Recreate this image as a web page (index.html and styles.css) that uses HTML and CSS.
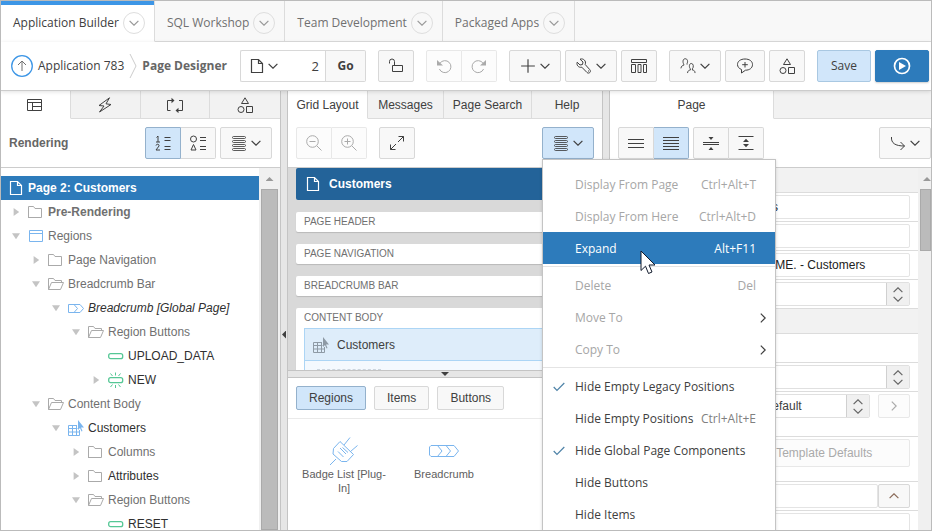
FILE: index.html
```html
<!DOCTYPE html>
<html lang="en">
<head>
<meta charset="utf-8">
<title>Page Designer</title>
<link rel="stylesheet" href="styles.css">
</head>
<body>
<svg class="sprite" aria-hidden="true">
  <symbol id="down" viewBox="0 0 10 6"><path d="M.6.8 5 5.2 9.4.8"/></symbol>
  <symbol id="page" viewBox="0 0 14 16"><path d="M1.5 1.5h7l4 4v9h-11zM8.500 1.500v4h4"/></symbol>
  <symbol id="lock" viewBox="0 0 16 16"><path d="M4.500 7.500h10v6h-10zM6.500 7.500V3.500a2.500 2.500 0 0 0-5 0V5.500"/></symbol>
  <symbol id="undo" viewBox="0 0 16 16"><path d="M4 5.200A6 6 0 1 1 3.400 11"/><path class="solid" d="M1 2v5.500h6z"/></symbol>
  <symbol id="plus" viewBox="0 0 14 14"><path d="M7 1v12M1 7h12"/></symbol>
  <symbol id="wrench" viewBox="0 0 16 16"><path d="M4 1.200 7 4 6.500 6.500 4 7 1.200 4.200C.2 7 2.500 10 5.800 9.200L11 14.500c2 1.800 4.600-.8 2.800-2.800L9.200 6.500C10.500 3 7.500 0 4 1.200zM12.500 12.500v1"/></symbol>
  <symbol id="layout" viewBox="0 0 16 16"><path d="M.5 1.500h15v3H.500zM.5 6.500h4v8h-4zM7 6.500h3v8H7zM12.500 6.500h3v8h-3z"/></symbol>
  <symbol id="people" viewBox="0 0 17 17"><path d="M1 11c.3-2.500 1.500-3 3-3.300V6.500C2.800 5 2.700.8 5.500.8S8.500 4 7.500 6v1M8 16c.2-2.500 1.500-3 3-3.200v-1.300c-1.500-1.500-1.500-5.700 1-5.700s2.700 4 1.200 5.700v1.300c1.500.2 2.700.7 2.800 3.200"/></symbol>
  <symbol id="comment" viewBox="0 0 16 16"><path d="M4.500 11.500v3.500l4-2.800c4 0 7-2.200 7-5.600S12.500 1 8 1 .5 3.300.5 6.500c0 2.300 1.500 4 4 5zM8 4v5.500M5.200 6.700h5.600"/></symbol>
  <symbol id="shapes" viewBox="0 0 16 16"><path d="M8 .8 11.500 6.500h-7zM9.500 9.500h6v6h-6z"/><circle cx="4" cy="12.500" r="3"/></symbol>
  <symbol id="play" viewBox="0 0 18 18"><circle cx="9" cy="9" r="7.500" stroke-width="1.700"/><path class="solid" d="M6 5l7 4-7 4z"/></symbol>
  <symbol id="tree" viewBox="0 0 16 14"><path d="M.5 1.500h14v11H.500zM.5 4.500h14M5.500 4.500v8M5.500 8.500h9" /></symbol>
  <symbol id="bolt" viewBox="0 0 16 16"><path d="M12.500.8 2 8.500l5 .5-4.500 6L14 7.500l-5-.7z"/></symbol>
  <symbol id="cycle" viewBox="0 0 18 16"><path d="M4.500 13.500h-3v-10H7M13 3.500h3.500v10H11"/><path class="solid" d="M5.500.8 8.500 3.500l-3 2.700zM12.500 10.800l-3 2.700 3 2.700z"/></symbol>
  <symbol id="numlist" viewBox="0 0 16 16"><path d="M1.500 2.500 3 1v6M1 7h4M1 10.500C1.500 8.500 4.500 9 4 11L1 15h4M9.500 2.500h6M9.500 5.500h6M9.500 11.500h6M9.500 14.500h6"/></symbol>
  <symbol id="shapelist" viewBox="0 0 16 16"><circle cx="3.500" cy="4" r="3"/><path d="M3.500 9.500 6 15H1zM10 2.500h6M10 5.500h6M10 11.500h6M10 14.500h6"/></symbol>
  <symbol id="stack" viewBox="0 0 16 16"><g stroke-width=".85"><rect x="1.500" y="1.500" width="13" height="2" rx="1"/><rect x="1.500" y="5.500" width="13" height="2" rx="1"/><rect x="1.500" y="9.500" width="13" height="2" rx="1"/><rect x="1.500" y="13.500" width="13" height="2" rx="1"/></g></symbol>
  <symbol id="zoomout" viewBox="0 0 16 16"><circle cx="6.500" cy="6.500" r="5.800"/><path d="M10.800 10.800l4.700 4.700M3.500 6.500h6"/></symbol>
  <symbol id="zoomin" viewBox="0 0 16 16"><circle cx="6.500" cy="6.500" r="5.800"/><path d="M10.800 10.800l4.700 4.700M3.500 6.500h6M6.500 3.500v6"/></symbol>
  <symbol id="enlarge" viewBox="0 0 16 16"><path d="M9 7l5.500-5.500M9.500 1.500h5v5M7 9l-5.500 5.500M1.500 9.500v5h5"/></symbol>
  <symbol id="lines3" viewBox="0 0 16 16"><path d="M0 4.500h16M0 8.500h16M0 12.500h16"/></symbol>
  <symbol id="lines5" viewBox="0 0 16 16"><path d="M0 2.500h16M0 5.500h16M0 8.500h16M0 11.500h16M0 14.500h16"/></symbol>
  <symbol id="squeeze" viewBox="0 0 16 16"><path d="M0 7.500h16M0 9.500h16"/><path class="solid" d="M5.500 2h5L8 5zM5.500 15h5L8 12z"/></symbol>
  <symbol id="spread" viewBox="0 0 16 16"><path d="M.5 1.500h15M.5 14.500h15"/><path class="solid" d="M5 7h6L8 3.800zM5 9h6l-3 3.200z"/></symbol>
  <symbol id="goto" viewBox="0 0 16 16"><path d="M1.500 2c-.5 6 3.500 9 13 9M10.500 7l4 4-4 4"/></symbol>
  <symbol id="folder" viewBox="0 0 16 14"><path d="M.5 13V1.500h5l1.500 2h6.500V12.500H.500z"/></symbol>
  <symbol id="folderopen" viewBox="0 0 16 14"><path d="M.5 12.500V1.500h5l1.500 2h6.500v2M.5 12.500l3-7h12l-3 7z"/></symbol>
  <symbol id="region" viewBox="0 0 16 14"><path d="M1.500 1.500h13v11h-13zM1.500 4.500h13"/></symbol>
  <symbol id="crumb" viewBox="0 0 16 14"><path d="M.5 3.500h11.500l3.500 4-3.500 4H.500zM6 3.500l3.500 4-3.500 4"/></symbol>
  <symbol id="pill" viewBox="0 0 16 16"><rect x=".7" y="5.700" width="14" height="5" rx="2" stroke-width="1.300"/></symbol>
  <symbol id="newpill" viewBox="0 0 16 16"><rect x=".7" y="5.700" width="14" height="5" rx="2" stroke-width="1.300"/><path d="M7.500.500v3M2.500 1.500l2 2.500M12.500 1.500l-2 2.500M7.500 13v3M2.500 15l2-2.500M12.500 15l-2-2.500"/></symbol>
  <symbol id="report" viewBox="0 0 16 16"><path d="M9 5.500H.5v10h11V10M.5 8.500h9M.5 12h11M4.500 5.500v10M8.500 5.500v10"/><path class="solid" d="M10 0v10l2-2 1.500 3.500 1-.5L13 7.500h3z"/></symbol>
  <symbol id="check" viewBox="0 0 12 10"><path d="M.7 5 4 8.500 11.300 1"/></symbol>
</svg>
<div class="app">
  <nav class="maintabs">
    <div class="maintab on"><a href="#">Application Builder</a><button class="round" aria-label="Application Builder menu"><svg class="chev"><use href="#down"/></svg></button></div>
    <div class="maintab"><a href="#">SQL Workshop</a><button class="round" aria-label="SQL Workshop menu"><svg class="chev"><use href="#down"/></svg></button></div>
    <div class="maintab"><a href="#">Team Development</a><button class="round" aria-label="Team Development menu"><svg class="chev"><use href="#down"/></svg></button></div>
    <div class="maintab"><a href="#">Packaged Apps</a><button class="round" aria-label="Packaged Apps menu"><svg class="chev"><use href="#down"/></svg></button></div>
    <div class="tabfill"></div>
  </nav>
  <header class="topbar">
    <div class="path">
      <button class="up" aria-label="Up"><svg viewBox="0 0 22 22"><circle cx="11" cy="11" r="10.300" stroke="#3d96e6" stroke-width="1.300"/><path d="M11 16V6M7 10l4-4 4 4"/></svg></button>
      <a href="#">Application 783</a>
      <svg class="sep" viewBox="0 0 8 24"><path d="M1 0l6 12-6 12"/></svg>
      <b>Page Designer</b>
    </div>
    <div class="tools">
      <div class="group wide-gap pagepick"><button class="btn plain drop" aria-label="Pages"><svg class="pg"><use href="#page"/></svg><svg class="chev"><use href="#down"/></svg></button><input type="text" value="2" aria-label="Page number"><button class="btn go">Go</button></div>
      <button class="btn icon wide-gap" aria-label="Lock"><svg><use href="#lock"/></svg></button>
      <div class="group wide-gap"><button class="btn icon off" aria-label="Undo"><svg><use href="#undo"/></svg></button><button class="btn icon off" aria-label="Redo"><svg class="flip"><use href="#undo"/></svg></button></div>
      <button class="btn drop" aria-label="Create"><svg><use href="#plus"/></svg><svg class="chev"><use href="#down"/></svg></button>
      <button class="btn drop" aria-label="Utilities"><svg><use href="#wrench"/></svg><svg class="chev"><use href="#down"/></svg></button>
      <button class="btn icon wide-gap" aria-label="Layout"><svg><use href="#layout"/></svg></button>
      <button class="btn drop" aria-label="Team"><svg><use href="#people"/></svg><svg class="chev"><use href="#down"/></svg></button>
      <button class="btn note" aria-label="Comments"><svg><use href="#comment"/></svg></button>
      <button class="btn icon wide-gap" aria-label="Shared components"><svg><use href="#shapes"/></svg></button>
      <button class="btn big save">Save</button>
      <button class="btn big run" aria-label="Run"><svg><use href="#play"/></svg></button>
    </div>
  </header>
  <main class="panes">
    <section class="pane">
      <div class="tabs four">
        <button class="on" aria-label="Rendering"><svg><use href="#tree"/></svg></button><button aria-label="Dynamic actions"><svg><use href="#bolt"/></svg></button><button aria-label="Processing"><svg class="w18"><use href="#cycle"/></svg></button><button aria-label="Shared"><svg><use href="#shapes"/></svg></button>
      </div>
      <div class="bar">
        <h2>Rendering</h2>
        <div class="group"><button class="btn icon on" aria-label="By order"><svg><use href="#numlist"/></svg></button><button class="btn icon" aria-label="By type"><svg><use href="#shapelist"/></svg></button></div>
        <button class="btn drop" aria-label="Tree menu"><svg><use href="#stack"/></svg><svg class="chev"><use href="#down"/></svg></button>
      </div>
      <div class="scroller">
        <ul class="tree">
          <li><div class="row sel"><svg class="pg"><use href="#page"/></svg><b>Page 2: Customers</b></div>
          <ul>
            <li><div class="row"><i class="shut"></i><svg><use href="#folder"/></svg><b>Pre-Rendering</b></div></li>
            <li><div class="row"><i class="open"></i><svg class="blue"><use href="#region"/></svg><span>Regions</span></div>
            <ul>
              <li><div class="row"><i class="shut"></i><svg><use href="#folder"/></svg><span>Page Navigation</span></div></li>
              <li><div class="row"><i class="open"></i><svg><use href="#folderopen"/></svg><span>Breadcrumb Bar</span></div>
              <ul>
                <li><div class="row dark"><i class="open"></i><svg class="blue"><use href="#crumb"/></svg><em>Breadcrumb [Global Page]</em></div>
                <ul>
                  <li><div class="row"><i class="open"></i><svg><use href="#folderopen"/></svg><span>Region Buttons</span></div>
                  <ul>
                    <li><div class="row dark"><i></i><svg class="green"><use href="#pill"/></svg><span>UPLOAD_DATA</span></div></li>
                    <li><div class="row dark"><i class="shut"></i><svg class="green"><use href="#newpill"/></svg><span>NEW</span></div></li>
                  </ul></li>
                </ul></li>
              </ul></li>
              <li><div class="row"><i class="open"></i><svg><use href="#folderopen"/></svg><span>Content Body</span></div>
              <ul>
                <li><div class="row dark"><i class="open"></i><svg class="blue"><use href="#report"/></svg><span>Customers</span></div>
                <ul>
                  <li><div class="row"><i class="shut"></i><svg><use href="#folder"/></svg><span>Columns</span></div></li>
                  <li><div class="row dark"><i class="shut"></i><svg><use href="#folder"/></svg><span>Attributes</span></div></li>
                  <li><div class="row"><i class="open"></i><svg><use href="#folderopen"/></svg><span>Region Buttons</span></div>
                  <ul>
                    <li><div class="row dark"><i></i><svg class="green"><use href="#pill"/></svg><span>RESET</span></div></li>
                  </ul></li>
                </ul></li>
              </ul></li>
            </ul></li>
          </ul></li>
        </ul>
        <div class="scrollbar"><span class="arrow"></span><span class="thumb long"></span></div>
      </div>
    </section>
    <div class="vsplit"><span class="left"></span></div>
    <section class="pane middle">
      <div class="tabs layouttabs">
        <button class="on">Grid Layout</button><button>Messages</button><button>Page Search</button><button>Help</button>
      </div>
      <div class="bar">
        <div class="group wide-gap"><button class="btn icon off" aria-label="Zoom out"><svg><use href="#zoomout"/></svg></button><button class="btn icon off" aria-label="Zoom in"><svg><use href="#zoomin"/></svg></button></div>
        <button class="btn icon" aria-label="Enlarge"><svg><use href="#enlarge"/></svg></button>
        <div class="menuwrap">
          <button class="btn drop on" aria-label="Layout menu"><svg><use href="#stack"/></svg><svg class="chev"><use href="#down"/></svg></button>
          <div class="menu">
            <button class="off"><span>Display From Page</span><kbd>Ctrl+Alt+T</kbd></button>
            <button class="off"><span>Display From Here</span><kbd>Ctrl+Alt+D</kbd></button>
            <button class="hot"><span>Expand</span><kbd>Alt+F11</kbd>
              <svg class="cursor" viewBox="0 0 16 25"><path d="M1 1v19.500l4.500-4.300L8.500 23.500l3.500-1.500-3-7h6z"/></svg></button>
            <hr>
            <button class="off"><span>Delete</span><kbd>Del</kbd></button>
            <button class="off"><span>Move To</span><svg class="chev more"><use href="#down"/></svg></button>
            <button class="off"><span>Copy To</span><svg class="chev more"><use href="#down"/></svg></button>
            <hr>
            <button><svg class="check"><use href="#check"/></svg><span>Hide Empty Legacy Positions</span></button>
            <button><span>Hide Empty Positions</span><kbd>Ctrl+Alt+E</kbd></button>
            <button><svg class="check"><use href="#check"/></svg><span>Hide Global Page Components</span></button>
            <button><span>Hide Buttons</span></button>
            <button><span>Hide Items</span></button>
          </div>
        </div>
      </div>
      <div class="canvas">
        <div class="cardhead"><svg class="pg"><use href="#page"/></svg><b>Customers</b></div>
        <div class="card">PAGE HEADER</div>
        <div class="card">PAGE NAVIGATION</div>
        <div class="card">BREADCRUMB BAR</div>
        <div class="card body">CONTENT BODY
          <div class="region"><div class="regionhead"><svg><use href="#report"/></svg><span>Customers</span></div><div class="slot"></div></div>
        </div>
      </div>
      <div class="hsplit"><span></span></div>
      <div class="gallery">
        <div class="switch"><button class="btn on">Regions</button><button class="btn">Items</button><button class="btn">Buttons</button></div>
        <div class="items">
          <div class="item"><svg viewBox="0 0 30 30"><path d="M1 29l6-6M4.500 12.500 11 5.500 24.500 18.500 18 25.500h-5.500L4 18zM15 9l6-7.500M21.500 15.500l7-6M11 12l6 6M9 15.500l5.500 5.500M13.500 11.500l5.500 5"/></svg><span>Badge List [Plug-In]</span></div>
          <div class="item"><svg viewBox="0 0 30 30"><path d="M2 9.500h23l4.500 5.500-4.500 5.500H2l-1.500-1.500v-8zM8.500 9.500 13 15l-4.500 5.500M17 9.500l4.500 5.500-4.500 5.500"/></svg><span>Breadcrumb</span></div>
        </div>
      </div>
    </section>
    <div class="vsplit"></div>
    <section class="pane">
      <div class="tabs one"><button class="on">Page</button><span></span></div>
      <div class="bar props">
        <div class="group"><button class="btn icon" aria-label="Show common"><svg><use href="#lines3"/></svg></button><button class="btn icon on" aria-label="Show all"><svg><use href="#lines5"/></svg></button></div>
        <div class="group"><button class="btn icon" aria-label="Collapse all"><svg><use href="#squeeze"/></svg></button><button class="btn icon" aria-label="Expand all"><svg><use href="#spread"/></svg></button></div>
        <button class="btn drop last" aria-label="Go to group"><svg><use href="#goto"/></svg><svg class="chev"><use href="#down"/></svg></button>
      </div>
      <div class="scroller">
        <div class="form">
          <div class="section"></div>
          <div class="field"><input type="text" value="Customers" aria-label="Name"></div>
          <div class="field"><input type="text" value="" aria-label="Alias"></div>
          <div class="field"><input type="text" value="&amp;APP_NAME. - Customers" aria-label="Title"></div>
          <div class="field"><div class="pick"><select aria-label="Page group"><option></option></select><span><svg class="chev upw"><use href="#down"/></svg><svg class="chev"><use href="#down"/></svg></span></div></div>
          <div class="section line"></div>
          <div class="field"></div>
          <div class="field"><div class="pick"><select aria-label="Page mode"><option></option></select><span><svg class="chev upw"><use href="#down"/></svg><svg class="chev"><use href="#down"/></svg></span></div></div>
          <div class="field tall"><div class="pick"><select aria-label="Page template"><option>Theme Default</option></select><span><svg class="chev upw"><use href="#down"/></svg><svg class="chev"><use href="#down"/></svg></span></div><button class="btn side off gap" aria-label="Open template"><svg class="chev right"><use href="#down"/></svg></button></div>
          <div class="field tall"><button class="btn template off">Use Template Defaults</button></div>
          <div class="field"><input type="text" value="" aria-label="CSS classes"><button class="btn side warm" aria-label="Choose class"><svg class="chev upw"><use href="#down"/></svg></button></div>
          <div class="field"><input type="text" value="" aria-label="Media type"></div>
        </div>
        <div class="scrollbar edge"><span class="arrow"></span><span class="thumb"></span></div>
      </div>
    </section>
  </main>
</div>
</body>
</html>
```
FILE: styles.css
```css
* { box-sizing: border-box; }
body { margin: 0; color: #404040; font: 12px/16px "Liberation Sans", Arial, sans-serif; }
button, input, select { font: inherit; color: inherit; margin: 0; }
button { cursor: pointer; }
a { color: inherit; text-decoration: none; }
svg { display: block; flex: none; width: 16px; height: 16px; fill: none; stroke: currentColor; stroke-width: 1; }
svg .solid, .solid { fill: currentColor; stroke: none; }
.sprite { position: absolute; width: 0; height: 0; }
.chev { width: 10px; height: 6px; stroke-width: 1.2; }
.pg { width: 14px; height: 16px; stroke-width: 1.2; }
.w18 { width: 18px; }
.flip { transform: scaleX(-1); }
.upw { transform: rotate(180deg); }

.app { display: flex; flex-direction: column; height: 100vh; overflow: hidden; border: 1px solid #bbb; background: #fff; }

.maintabs { display: flex; flex: none; height: 41px; font-family: "Open Sans", sans-serif; color: #707070; }
.maintab { display: flex; align-items: center; gap: 4px; padding: 3px 9px 0 12px; background: #f8f8f8; border-right: 1px solid #dcdcdc; border-bottom: 1px solid #dcdcdc; }
.maintab.on { color: #404040; background: #fff; border-bottom-color: #fff; box-shadow: inset 0 4px #3d96e6; }
.tabfill { flex: 1; background: #f8f8f8; border-bottom: 1px solid #dcdcdc; }
.round { display: grid; place-items: center; width: 22px; height: 22px; padding: 0; border: 1px solid #dedede; border-radius: 50%; background: transparent; color: #999; }

.topbar { display: flex; align-items: center; justify-content: space-between; flex: none; height: 49px; padding: 0 2px 0 10px; border-bottom: 1px solid #ccc; font-family: "Open Sans", sans-serif; box-shadow: 0 1px 4px rgba(0,0,0,.12); z-index: 1; }
.path { display: flex; align-items: center; gap: 5px; white-space: nowrap; }
.path b { color: #666; }
.up { padding: 0; border: 0; background: none; color: #707070; }
.up svg { width: 22px; height: 22px; }
.sep { width: 8px; height: 24px; color: #ccc; }
.tools { display: flex; gap: 4px; }
.wide-gap { margin-right: 8px; }
.group { display: flex; }
.btn { display: flex; align-items: center; justify-content: center; height: 32px; padding: 0; border: 1px solid #d8d8d8; border-radius: 2px; background: #f8f8f8; color: #404040; }
.icon { width: 36px; }
.drop { width: 52px; gap: 4px; }
.note { width: 40px; }
.group .btn:first-child { border-radius: 2px 0 0 2px; }
.group .btn:last-child { border-radius: 0 2px 2px 0; border-left: 0; }
.group .icon:last-child { width: 35px; }
.btn.on { background: #d1e6fa; border: 1px solid #94b1cc; }
.btn.off { background: #fcfcfc; border-color: #e8e8e8; color: #aaa; }
.plain { background: #fff; border-right: 0; }
.pagepick .plain { width: 46px; }
.pagepick input { width: 40px; padding: 0 6px 0 0; border: 1px solid #d8d8d8; border-left: 0; text-align: right; font-size: 13px; }
.go { width: 40px; font-weight: 700; }
.big { width: 54px; }
.save { background: #d1e6fa; border-color: #a9c8e2; }
.run { background: #2d7bbb; border-color: #2d7bbb; color: #fff; box-shadow: 0 1px 2px rgba(0,0,0,.2); }
.run svg { width: 18px; height: 18px; }

.panes { display: grid; flex: 1; min-height: 0; grid-template-columns: minmax(0,279fr) 8px minmax(0,314fr) 8px minmax(0,321fr); grid-template-rows: minmax(0,1fr); }
.pane { display: flex; flex-direction: column; min-height: 0; }
.tabs { display: grid; flex: none; height: 28px; }
.tabs > * { display: flex; align-items: center; justify-content: center; padding: 0; border: 0; border-right: 1px solid #dcdcdc; border-bottom: 1px solid #dcdcdc; background: #f2f2f2; }
.tabs > .on { background: #fff; border-bottom-color: #fff; }
.tabs > :last-child { border-right: 0; }
.four { grid-template-columns: repeat(4,1fr); }
.layouttabs { grid-template-columns: 80fr 76fr 88fr 70fr; }
.one { grid-template-columns: 164fr 157fr; }
.bar { display: flex; align-items: center; gap: 4px; flex: none; height: 49px; padding: 0 8px; border-bottom: 1px solid #ccc; }
.bar h2 { flex: 1; margin: 0; font: 700 12px/16px "Liberation Sans", Arial, sans-serif; color: #666; }
.bar.props { padding-right: 0; }
.props .last, .menuwrap { margin-left: auto; }
.scroller { display: flex; flex: 1; min-height: 0; overflow: hidden; }

.tree { flex: 1; margin: 0; padding: 8px 0 0; list-style: none; white-space: nowrap; color: #707070; }
.tree ul { margin: 0; padding: 0; list-style: none; }
.tree ul ul { padding-left: 20px; }
.row { display: flex; align-items: center; height: 24px; gap: 4px; padding-left: 11px; }
.row svg { color: #aaa; }
.row.sel { gap: 5px; padding-left: 8px; background: #2d7bbb; color: #fff; }
.row.sel svg { color: #fff; }
.row.dark { color: #303030; }
.row svg.blue { color: #7ab5ee; }
.row svg.green { color: #55c795; }
.row i { width: 8px; height: 8px; margin-right: 4px; background: #c4c4c4; clip-path: polygon(0 0, 0 0, 0 0); }
.row i.shut { clip-path: polygon(20% 0, 90% 50%, 20% 100%); }
.row i.open { clip-path: polygon(0 15%, 100% 15%, 50% 90%); }

.scrollbar { display: flex; flex-direction: column; align-items: center; flex: none; width: 21px; background: #f0f0f0; }
.arrow { flex: none; width: 8px; height: 4px; margin: 9px 0 8px; background: #999; clip-path: polygon(0 100%, 50% 0, 100% 100%); }
.thumb { flex: none; width: 17px; height: 62px; border: 1px solid #aaa; background: #bbb; }
.thumb.long { flex: 1; }
.edge { width: 13px; align-items: flex-end; }
.edge .thumb { width: 11px; }

.vsplit { display: flex; align-items: center; justify-content: center; border: solid #c4c4c4; border-width: 0 1px; background: #e6e6e6; }
.left { width: 4px; height: 8px; background: #404040; clip-path: polygon(100% 0, 0 50%, 100% 100%); margin-top: 48px; }
.hsplit { display: flex; align-items: center; justify-content: center; flex: none; height: 8px; border: solid #c4c4c4; border-width: 1px 0; background: #e6e6e6; }
.hsplit span { width: 8px; height: 4px; background: #404040; clip-path: polygon(0 0, 100% 0, 50% 100%); }

.canvas { display: flex; flex-direction: column; flex: 202 1 0; gap: 12px; min-height: 0; overflow: hidden; padding: 0 8px; background: #d9d9d9; }
.cardhead { display: flex; align-items: center; flex: none; gap: 9px; height: 32px; padding-left: 10px; border-radius: 2px; background: #236399; color: #fff; }
.card { flex: none; height: 20px; padding: 0 8px; border-radius: 2px; background: #fff; color: #707070; font-size: 10px; line-height: 20px; box-shadow: 0 1px 1px rgba(0,0,0,.15); }
.card.body { height: 80px; }
.region { height: 60px; border: 1px solid #acd5f5; border-bottom: 0; background: #f4f9fe; color: #404040; font-size: 12px; }
.regionhead { display: flex; align-items: center; gap: 8px; height: 32px; padding-left: 8px; border-bottom: 1px solid #acd5f5; background: #deedfa; }
.regionhead svg { color: #8e9aa5; }
.slot { width: 64px; margin: 8px 12px; border-top: 1px dashed #ccd5de; }

.gallery { flex: 152 1 0; min-height: 0; }
.switch { display: flex; gap: 8px; padding: 8px; border-bottom: 1px solid #eaeaea; }
.switch .btn { height: 24px; padding: 0 12px; }
.items { display: flex; gap: 4px; padding: 16px 8px; }
.item { width: 96px; padding: 0 4px; font-size: 11px; line-height: 14px; text-align: center; color: #606060; }
.item svg { width: 30px; height: 32px; margin: 0 auto; color: #7ab5ee; }

.menuwrap { position: relative; }
.menu { position: absolute; z-index: 5; top: 100%; left: 0; width: 234px; padding: 8px 0; border: 1px solid #c4c4c4; background: #fff; font-family: "Open Sans", sans-serif; box-shadow: 0 1px 3px rgba(0,0,0,.15); }
.menu button { position: relative; display: flex; align-items: center; justify-content: space-between; width: 100%; height: 32px; padding: 2px 19px 0 32px; border: 0; background: none; white-space: nowrap; }
.menu kbd { font: inherit; color: #808080; }
.menu .off, .menu .off kbd { color: #a6a6a6; }
.menu .hot, .menu .hot kbd { background: #2d7bbb; color: #fff; }
.menu hr { height: 1px; margin: 2px 0; border: 0; background: #e4e4e4; }
.more { color: #404040; transform: rotate(-90deg); margin-right: -12px; }
.check { position: absolute; left: 10px; width: 12px; height: 10px; color: #4f83a8; stroke-width: 1.2; }
.cursor { position: absolute; left: 97px; top: 18px; width: 16px; height: 25px; z-index: 1; fill: #fff; stroke: #111a2c; }

.form { flex: 1; min-width: 0; }
.section { height: 24px; background: #f2f2f2; }
.section.line { height: 25px; border-top: 1px solid #dcdcdc; }
.field { display: flex; align-items: flex-start; height: 29px; padding: 2px 8px 0 104px; border-top: 1px solid #dcdcdc; }
.field.tall { height: 45px; }
.field input { flex: 1; min-width: 0; height: 24px; padding: 0 5px; border: 1px solid #e4e4e4; border-radius: 2px; background: #fff; color: #202020; }
.pick { display: flex; flex: 1; min-width: 0; height: 24px; border: 1px solid #e0e0e0; border-radius: 2px; }
.pick select { flex: 1; min-width: 0; appearance: none; padding: 0 8px; border: 0; background: #fff; }
.pick span { display: flex; flex-direction: column; align-items: center; justify-content: center; gap: 3px; width: 23px; border-left: 1px solid #d0d0d0; background: #f0f0f0; color: #666; }
.side { width: 32px; height: 24px; }
.side.gap { margin-left: 8px; }
.side.warm { color: #8a6a58; }
.right { transform: rotate(-90deg); }
.template { flex: 1; height: 28px; }
```
